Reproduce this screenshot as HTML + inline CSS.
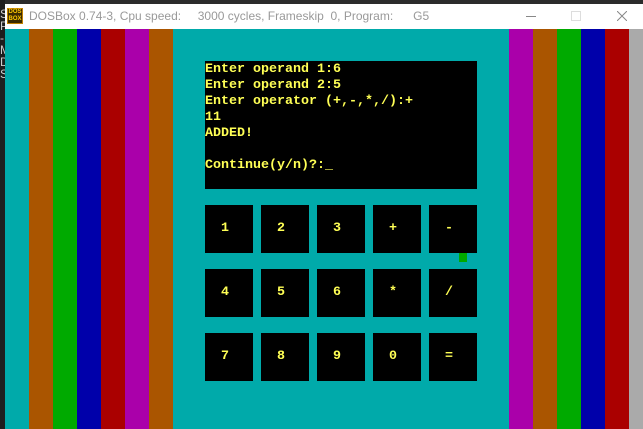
<!DOCTYPE html>
<html><head><style>
*{margin:0;padding:0;box-sizing:border-box}
body{width:643px;height:429px;overflow:hidden;background:#00aaaa;position:relative;font-family:"Liberation Mono",monospace}
.a{position:absolute}
.top{left:0;top:0;width:643px;height:4px;background:#2b2b2b}
.tb{left:5px;top:4px;width:638px;height:25px;background:#fff}
.left{left:0;top:0;width:5px;height:429px;background:#1e1e1e;overflow:hidden;color:#ccc;font:12px "Liberation Sans",sans-serif;line-height:12px}
.title{left:29px;top:9px;font:12px "Liberation Sans",sans-serif;color:#999;white-space:pre}
.s{top:29px;height:400px;width:24px}
.box{left:205px;top:61px;width:272px;height:128px;background:#000}
.txt{left:205px;top:62px;color:#ffff55;font:bold 13.33px "Liberation Mono",monospace;line-height:16px;white-space:pre}
.b{width:48px;height:48px;background:#000;color:#ffff55;font:bold 13.33px "Liberation Mono",monospace;line-height:48px;padding-left:16px}
</style></head><body>
<div class="a top"></div>
<div class="a tb"></div>
<div class="a left"><div style="padding-top:8px">S<br>P<br>-<br>M<br>D<br>S</div></div>
<div class="a" style="left:7px;top:8px;width:16px;height:16px;background:#3a2a00;border:1px solid #c08000;color:#ffcc00;font:bold 6px 'Liberation Sans',sans-serif;line-height:7px;text-align:center">DOS<br>BOX</div>
<div class="a title">DOSBox 0.74-3, Cpu speed:     3000 cycles, Frameskip  0, Program:      G5</div>
<div class="a" style="left:526px;top:16px;width:10px;height:1px;background:#888"></div>
<div class="a" style="left:571px;top:11px;width:10px;height:10px;border:1px solid #ddd"></div>
<svg class="a" style="left:617px;top:11px" width="10" height="10"><path d="M0 0L10 10M10 0L0 10" stroke="#888" stroke-width="1"/></svg>
<div class="a s" style="left:29px;background:#aa5500"></div>
<div class="a s" style="left:53px;background:#00aa00"></div>
<div class="a s" style="left:77px;background:#0000aa"></div>
<div class="a s" style="left:101px;background:#aa0000"></div>
<div class="a s" style="left:125px;background:#aa00aa"></div>
<div class="a s" style="left:149px;background:#aa5500"></div>
<div class="a s" style="left:509px;background:#aa00aa"></div>
<div class="a s" style="left:533px;background:#aa5500"></div>
<div class="a s" style="left:557px;background:#00aa00"></div>
<div class="a s" style="left:581px;background:#0000aa"></div>
<div class="a s" style="left:605px;background:#aa0000"></div>
<div class="a s" style="left:629px;background:#aaaaaa;width:14px"></div>
<div class="a box"></div>
<div class="a txt">Enter operand 1:6
Enter operand 2:5
Enter operator (+,-,*,/):+
11
ADDED!

Continue(y/n)?:_</div>
<div class="a b" style="left:205px;top:205px">1</div>
<div class="a b" style="left:261px;top:205px">2</div>
<div class="a b" style="left:317px;top:205px">3</div>
<div class="a b" style="left:373px;top:205px">+</div>
<div class="a b" style="left:429px;top:205px">-</div>
<div class="a b" style="left:205px;top:269px">4</div>
<div class="a b" style="left:261px;top:269px">5</div>
<div class="a b" style="left:317px;top:269px">6</div>
<div class="a b" style="left:373px;top:269px">*</div>
<div class="a b" style="left:429px;top:269px">/</div>
<div class="a b" style="left:205px;top:333px">7</div>
<div class="a b" style="left:261px;top:333px">8</div>
<div class="a b" style="left:317px;top:333px">9</div>
<div class="a b" style="left:373px;top:333px">0</div>
<div class="a b" style="left:429px;top:333px">=</div>
<div class="a" style="left:459px;top:253px;width:8px;height:9px;background:#00aa00"></div>
</body></html>
